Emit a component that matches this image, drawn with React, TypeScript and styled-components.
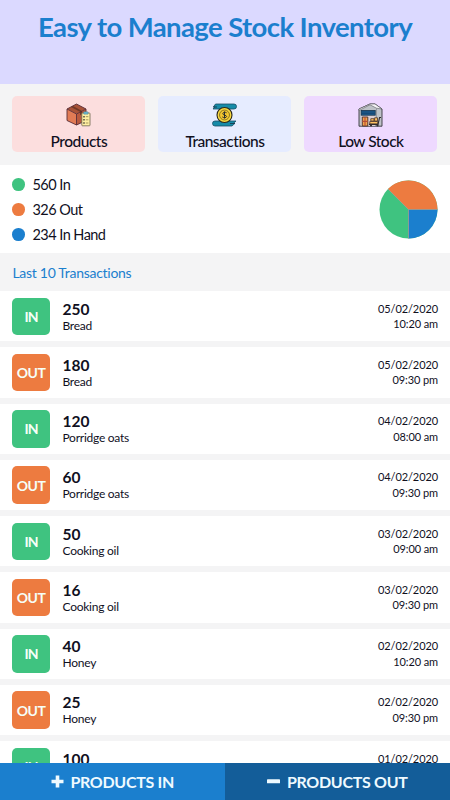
import React from 'react';
import styled, { createGlobalStyle } from 'styled-components';

const color = {
  green: '#3fc380',
  orange: '#ed7b40',
  blue: '#1b7fce',
  navy: '#135d99',
  ink: '#10101e',
  grey: '#f4f4f5',
};

const GlobalStyle = createGlobalStyle`
  * { box-sizing: border-box; }
  body { margin: 0; font-family: Lato, sans-serif; color: ${color.ink}; background: #fff; }
`;

const Screen = styled.div`
  width: 450px;
  height: 800px;
  overflow: hidden;
  display: flex;
  flex-direction: column;
  white-space: nowrap;
`;

const Header = styled.header`
  flex: 0 0 83.5px;
  padding-top: 9px;
  background: #dbd9ff;
  text-align: center;
`;

const Title = styled.h1`
  margin: 0;
  font-size: 27.5px;
  line-height: 36px;
  font-weight: 700;
  letter-spacing: -0.6px;
  color: ${color.blue};
`;

const Cards = styled.nav`
  flex: 0 0 81.5px;
  display: grid;
  grid-template-columns: repeat(3, 133px);
  grid-template-rows: 56px;
  column-gap: 13px;
  padding: 12.5px 0 0 12.4px;
  background: ${color.grey};
`;

const Card = styled.div<{ $tint: string }>`
  display: flex;
  flex-direction: column;
  align-items: center;
  padding-top: 7px;
  border-radius: 5px;
  background: ${(p) => p.$tint};

  svg { display: block; flex: none; }
`;

const CardLabel = styled.span`
  margin-top: 4px;
  font-size: 15.5px;
  line-height: 20px;
  font-weight: 500;
  letter-spacing: -0.5px;
`;

const Summary = styled.section`
  flex: 0 0 88px;
  display: flex;
  justify-content: space-between;
  padding: 7px 12px 0 12.4px;
  background: #fff;
`;

const Legend = styled.ul`
  margin: 0;
  padding: 0;
  list-style: none;
`;

const LegendItem = styled.li<{ $dot: string }>`
  display: flex;
  align-items: center;
  height: 25px;
  font-size: 14.5px;
  letter-spacing: -0.55px;

  &::before {
    content: '';
    flex: none;
    width: 12.6px;
    height: 12.6px;
    margin-right: 7.5px;
    border-radius: 50%;
    background: ${(p) => p.$dot};
  }
`;

const Chart = styled.svg`
  width: 59px;
  height: 59px;
  margin-top: 7.5px;
`;

const SectionTitle = styled.h2`
  flex: 0 0 38px;
  margin: 0;
  padding: 2px 0 0 12.4px;
  background: ${color.grey};
  color: ${color.blue};
  font-size: 14px;
  line-height: 36px;
  font-weight: 400;
  letter-spacing: -0.28px;
`;

const List = styled.div`
  flex: 1 1 0;
  min-height: 0;
  overflow: hidden;
`;

const Row = styled.div`
  display: flex;
  height: 56.27px;
  padding: 6.5px 12px 0 12.4px;
  border-bottom: 6px solid ${color.grey};
`;

const Badge = styled.div<{ $out: boolean }>`
  display: flex;
  align-items: center;
  justify-content: center;
  width: 37.5px;
  height: 37.5px;
  flex: none;
  border-radius: 5px;
  background: ${(p) => (p.$out ? color.orange : color.green)};
  color: #f6fff8;
  font-size: 14px;
  font-weight: 700;
  letter-spacing: ${(p) => (p.$out ? '-0.4px' : '-0.9px')};
`;

const Details = styled.div`
  flex: 1;
  margin-left: 12.6px;
`;

const Quantity = styled.div`
  padding-top: 2px;
  font-size: 15.5px;
  line-height: 18px;
  font-weight: 700;
`;

const ProductName = styled.div`
  font-size: 12px;
  line-height: 16px;
  letter-spacing: -0.25px;
`;

const When = styled.div`
  padding-top: 3px;
  text-align: right;
  font-size: 11px;
  line-height: 15.5px;
  letter-spacing: -0.1px;
`;

const Footer = styled.footer`
  flex: 0 0 37px;
  display: grid;
  grid-template-columns: 1fr 1fr;
`;

const Action = styled.div<{ $dark?: boolean }>`
  display: flex;
  align-items: center;
  justify-content: center;
  gap: 6.5px;
  background: ${(p) => (p.$dark ? color.navy : color.blue)};
  color: #effaff;
  font-size: 16px;
  font-weight: 700;
  letter-spacing: -0.3px;
`;

const BoxIcon = () => (
  <svg width="25" height="24" viewBox="0 0 25 24">
    <path d="M1 6 10.5 1 20 6 10.5 11Z" fill="#a85237" />
    <path d="M1 6 10.5 11V22L1 17.5Z" fill="#e17b55" />
    <path d="M10.5 11 20 6V17.5L10.5 22Z" fill="#b9593e" />
    <path d="M5 4 14 8.8V12L16 11V8L7 3Z" fill="#713927" />
    <path d="M1 6 10.5 1 20 6V17.5L10.5 22 1 17.5ZM1 6 10.5 11 20 6M10.5 11V22" fill="none" stroke="#592d35" strokeWidth=".9" />
    <rect x="15.8" y="10" width="8.2" height="12.8" rx=".7" fill="#fff0a3" stroke="#6c664d" strokeWidth=".8" />
    <rect x="17.7" y="8.8" width="4.4" height="2.4" rx=".5" fill="#68b9cf" stroke="#537588" strokeWidth=".4" />
    <path d="M17.3 13.7h1.4M17.3 16.8h1.4M17.3 20h1.4" stroke="#413e37" strokeWidth="1.5" />
    <path d="M19.8 13.7h2.6M19.8 16.8h2.6M19.8 20h2.6" stroke="#9b8c55" strokeWidth=".9" />
  </svg>
);

const CoinIcon = () => (
  <svg width="25" height="24" viewBox="0 0 25 24">
    <path d="M3.5 1H22a2.2 2.2 0 0 1 0 5H1L3 3.8H1.5Z" fill="#168ba8" stroke="#164e65" strokeWidth=".8" />
    <path d="M3 18H24L21.5 20.3H23L20 23H3a2.4 2.4 0 0 1 0-5Z" fill="#168ba8" stroke="#164e65" strokeWidth=".8" />
    <path d="M1 4H5M18 20.5H23" stroke="#123448" strokeWidth=".8" />
    <circle cx="12.5" cy="12" r="7.5" fill="#f9d83e" stroke="#29261b" strokeWidth="1.1" />
    <circle cx="12.5" cy="12" r="5" fill="#f4c62e" stroke="#745e20" strokeWidth=".8" />
    <path d="M14.6 9.8C13.7 9 10.8 9 10.8 10.7S14.6 12 14.6 13.5 11.2 14.9 10.3 13.9M12.5 8.5v7" fill="none" stroke="#292f30" strokeWidth="1" />
  </svg>
);

const WarehouseIcon = () => (
  <svg width="25" height="24" viewBox="0 0 25 24">
    <path d="M1 6 12 1H17L24 6V23.2H1Z" fill="#bec2c7" stroke="#36363d" strokeWidth=".9" />
    <path d="M1 6 12 1H17L24 6 18.5 5.2 12 1.8 1 7.5Z" fill="#f5f4f6" stroke="#5b5c62" strokeWidth=".6" />
    <path d="M18.5 5.5V20" stroke="#86878c" strokeWidth=".7" />
    <path d="M3.3 12H17V23H3.3Z" fill="#ddcfd0" />
    <rect x="3.2" y="7.5" width="14" height="4.7" fill="#1f5f91" stroke="#17334c" strokeWidth=".8" />
    <path d="M3.6 9H16.8M3.6 10.6H16.8" stroke="#123f69" strokeWidth=".7" />
    <path d="M4.3 14H9.8V23H4.3Z" fill="#f3a34c" stroke="#472e2b" strokeWidth=".9" />
    <path d="M4.3 18.4H9.8M7 14V23" stroke="#b64c36" strokeWidth="1.1" />
    <path d="M11.8 18.5H19.8V21H11.8ZM12.8 15.7H16V18H12.8ZM16.6 14.8H19.5V18H16.6Z" fill="#ffc263" stroke="#4d3529" strokeWidth=".8" />
    <path d="M11 21.4H20L21.6 14.5H23" fill="none" stroke="#322c2e" strokeWidth="1.1" />
    <circle cx="13" cy="22.4" r="1.1" fill="#342f32" />
    <circle cx="19.5" cy="22.4" r="1.1" fill="#342f32" />
  </svg>
);

const PlusIcon = () => (
  <svg width="13" height="13" viewBox="0 0 13 13">
    <path d="M4.7 .5H8.3V4.7H12.5V8.3H8.3V12.5H4.7V8.3H.5V4.7H4.7Z" fill="currentColor" />
  </svg>
);

const MinusIcon = () => (
  <svg width="13" height="13" viewBox="0 0 13 13">
    <rect y="4.3" width="13" height="4" rx=".4" fill="currentColor" />
  </svg>
);

const transactions = [
  { type: 'IN', quantity: 250, name: 'Bread', date: '05/02/2020', time: '10:20 am' },
  { type: 'OUT', quantity: 180, name: 'Bread', date: '05/02/2020', time: '09:30 pm' },
  { type: 'IN', quantity: 120, name: 'Porridge oats', date: '04/02/2020', time: '08:00 am' },
  { type: 'OUT', quantity: 60, name: 'Porridge oats', date: '04/02/2020', time: '09:30 pm' },
  { type: 'IN', quantity: 50, name: 'Cooking oil', date: '03/02/2020', time: '09:00 am' },
  { type: 'OUT', quantity: 16, name: 'Cooking oil', date: '03/02/2020', time: '09:30 pm' },
  { type: 'IN', quantity: 40, name: 'Honey', date: '02/02/2020', time: '10:20 am' },
  { type: 'OUT', quantity: 25, name: 'Honey', date: '02/02/2020', time: '09:30 pm' },
  { type: 'IN', quantity: 100, name: '', date: '01/02/2020', time: '' },
];

export default function App() {
  return (
    <Screen>
      <GlobalStyle />
      <Header>
        <Title>Easy to Manage Stock Inventory</Title>
      </Header>
      <Cards>
        <Card $tint="#fcdede"><BoxIcon /><CardLabel>Products</CardLabel></Card>
        <Card $tint="#e6ecff"><CoinIcon /><CardLabel>Transactions</CardLabel></Card>
        <Card $tint="#eed9ff"><WarehouseIcon /><CardLabel>Low Stock</CardLabel></Card>
      </Cards>
      <Summary>
        <Legend>
          <LegendItem $dot={color.green}>560 In</LegendItem>
          <LegendItem $dot={color.orange}>326 Out</LegendItem>
          <LegendItem $dot={color.blue}>234 In Hand</LegendItem>
        </Legend>
        <Chart viewBox="-29.5 -29.5 59 59">
          <circle r="29" fill={color.green} />
          <path d="M0 0 29 0A29 29 0 0 0 -20.5 -20.5Z" fill={color.orange} />
          <path d="M0 0H29A29 29 0 0 1 0 29Z" fill={color.blue} />
          <path d="M-20.5 -20.5 0 0H29M0 0V29" fill="none" stroke="#b09b91" strokeWidth=".7" />
        </Chart>
      </Summary>
      <SectionTitle>Last 10 Transactions</SectionTitle>
      <List>
        {transactions.map((t, i) => (
          <Row key={i}>
            <Badge $out={t.type === 'OUT'}>{t.type}</Badge>
            <Details>
              <Quantity>{t.quantity}</Quantity>
              <ProductName>{t.name}</ProductName>
            </Details>
            <When>
              <div>{t.date}</div>
              <div>{t.time}</div>
            </When>
          </Row>
        ))}
      </List>
      <Footer>
        <Action><PlusIcon />PRODUCTS IN</Action>
        <Action $dark><MinusIcon />PRODUCTS OUT</Action>
      </Footer>
    </Screen>
  );
}
